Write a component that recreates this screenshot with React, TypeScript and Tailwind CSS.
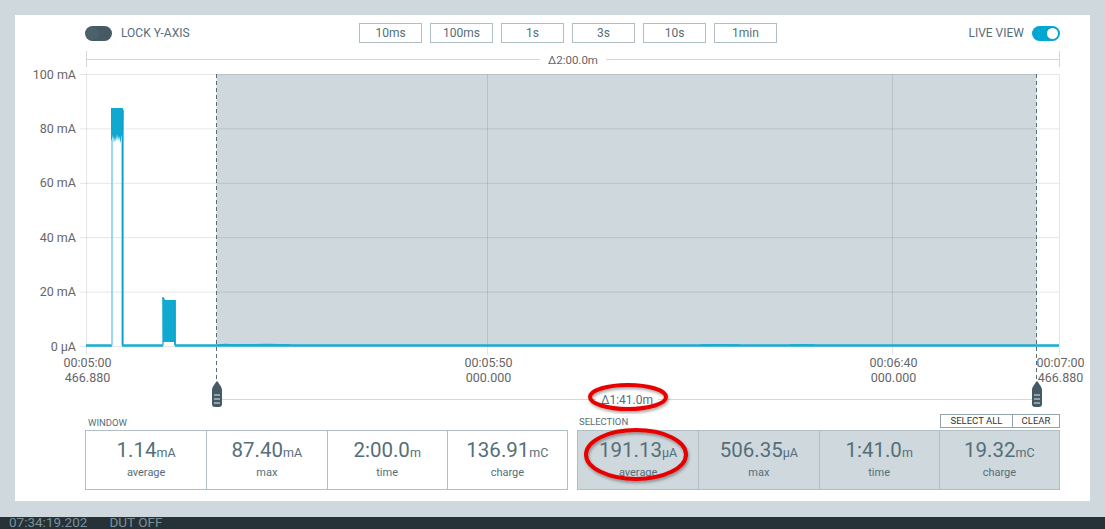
import React from "react";

const GRID_Y = [74, 128.4, 182.8, 237.2, 291.6, 346];
const Y_LABELS = ["100 mA", "80 mA", "60 mA", "40 mA", "20 mA", "0 µA"];

function Handle({ x }: { x: number }) {
  return (
    <g>
      <path
        d={`M${x},381 C${x + 1.5},383 ${x + 5},387 ${x + 5},390 L${x + 5},404 Q${x + 5},407 ${x + 2},407 L${x - 2},407 Q${x - 5},407 ${x - 5},404 L${x - 5},390 C${x - 5},387 ${x - 1.5},383 ${x},381 Z`}
        fill="#455a64"
      />
      <line x1={x - 3} x2={x + 3} y1={395} y2={395} stroke="#aebbc2" strokeWidth={1.5} />
      <line x1={x - 3} x2={x + 3} y1={399} y2={399} stroke="#aebbc2" strokeWidth={1.5} />
      <line x1={x - 3} x2={x + 3} y1={403} y2={403} stroke="#aebbc2" strokeWidth={1.5} />
    </g>
  );
}

function Chart() {
  const xTicks = [
    { x: 86.5, a: "00:05:00", b: "466.880" },
    { x: 487.5, a: "00:05:50", b: "000.000" },
    { x: 892.5, a: "00:06:40", b: "000.000" },
    { x: 1059.5, a: "00:07:00", b: "466.880" },
  ];
  return (
    <svg width={1074} height={369} viewBox="15 43 1074 369" className="block" style={{ fontFamily: "Roboto, sans-serif" }}>
      {/* window span line */}
      <line x1={86} x2={1059} y1={59.5} y2={59.5} stroke="#cfd8dc" strokeWidth={1} />
      <line x1={86.5} x2={86.5} y1={51} y2={67} stroke="#cfd8dc" strokeWidth={1} />
      <line x1={1059.5} x2={1059.5} y1={51} y2={67} stroke="#cfd8dc" strokeWidth={1} />
      <rect x={540} y={52} width={66} height={14} fill="#ffffff" />
      <text x={573} y={63.5} textAnchor="middle" fontSize={11.5} fill="#666666">
        Δ2:00.0m
      </text>

      {/* selection area */}
      <rect x={216.5} y={74} width={820} height={272} fill="#cfd8dc" />

      {/* grid */}
      {GRID_Y.map((y, i) => (
        <g key={i}>
          <line x1={80} x2={1059} y1={y + 0.5} y2={y + 0.5} stroke="rgba(0,0,0,0.1)" strokeWidth={1} />
          <text x={76} y={y + 4.5} textAnchor="end" fontSize={12.5} fill="#666666">
            {Y_LABELS[i]}
          </text>
        </g>
      ))}
      {xTicks.map((t, i) => (
        <g key={i}>
          <line x1={t.x} x2={t.x} y1={74} y2={355} stroke="rgba(0,0,0,0.1)" strokeWidth={1} />
          <text x={t.x + 1} y={366.5} textAnchor="middle" fontSize={12.5} fill="#666666">
            {t.a}
          </text>
          <text x={t.x + 1} y={381.5} textAnchor="middle" fontSize={12.5} fill="#666666">
            {t.b}
          </text>
        </g>
      ))}

      {/* data */}
      <polyline points="86,345.5 112,345.5" fill="none" stroke="#1aabd2" strokeWidth={2.5} />
      <polyline points="112,345.5 112,140" fill="none" stroke="#7fd2e6" strokeWidth={1.6} />
      <polygon
        points="111,108 123,108 123.5,112 123,140 121.5,135 120.5,143 119,136 118,141 117,134 116,142 115,137 114,143 113,135 112,141 111,139"
        fill="#11a8cf"
      />
      <polyline points="122.6,110 122.6,345.5" fill="none" stroke="#0aa5cd" strokeWidth={2} />
      <polyline points="122,345.5 163,345.5" fill="none" stroke="#1aabd2" strokeWidth={2.5} />
      <polyline points="163,345.5 163,297" fill="none" stroke="#3fb6d8" strokeWidth={1.5} />
      <polygon points="162.5,297 164.5,298.5 165,300 175,300 175,342 163,342" fill="#10a9d0" />
      <polyline points="175,300 175,345.5" fill="none" stroke="#0aa5cd" strokeWidth={1.8} />
      <polyline points="175,345.5 1059,345.5" fill="none" stroke="#1aabd2" strokeWidth={2.5} />
      <polyline points="218,345 226,344.6 234,345 240,344.8 268,344.6 290,345" fill="none" stroke="#1aabd2" strokeWidth={1.5} />
      <polyline points="700,345 720,344.7 740,345" fill="none" stroke="#1aabd2" strokeWidth={1.5} />
      <polyline points="790,345 800,344.7 815,345" fill="none" stroke="#1aabd2" strokeWidth={1.5} />

      {/* cursors */}
      <line x1={216.5} x2={216.5} y1={74} y2={385} stroke="#546e7a" strokeWidth={1} strokeDasharray="4 3" />
      <line x1={1036.5} x2={1036.5} y1={74} y2={385} stroke="#546e7a" strokeWidth={1} strokeDasharray="4 3" />

      <line x1={221} x2={1032} y1={399.5} y2={399.5} stroke="#cfd8dc" strokeWidth={1} />
      <rect x={596} y={391} width={62} height={16} fill="#ffffff" />
      <text x={627} y={403.5} textAnchor="middle" fontSize={12} fill="#546e7a">
        Δ1:41.0m
      </text>
      <Handle x={217} />
      <Handle x={1037} />
    </svg>
  );
}

function Stat({ value, unit, label, first }: { value: string; unit: string; label: string; first?: boolean }) {
  return (
    <div className={`flex flex-col items-center pt-[9px] ${first ? "" : "border-l border-[#b0bec5]"}`}>
      <div className="flex items-baseline leading-none text-[#546e7a]">
        <span className="text-[20.5px]">{value}</span>
        <span className="text-[12.5px]">{unit}</span>
      </div>
      <div className="mt-[6px] text-[11px] leading-none text-[#546e7a]">{label}</div>
    </div>
  );
}

export default function App() {
  return (
    <div
      className="relative h-[529px] w-[1105px] overflow-hidden bg-[#cfd8dc]"
      style={{ fontFamily: "Roboto, 'Noto Sans', sans-serif" }}
    >
      <div className="h-[517px] px-[15px] pt-[15px]">
        <div className="flex h-[486px] flex-col bg-white pt-[8px]">
          {/* top row */}
          <div className="flex h-[20px] items-center pl-[70px] pr-[30px]">
            <div className="flex w-[274px] items-center">
              <div className="relative h-[15px] w-[27px] rounded-full bg-[#455a64]">
                <div className="absolute left-[1px] top-[1px] h-[13px] w-[13px] rounded-full bg-[#4c616b]" />
              </div>
              <span className="ml-[9px] text-[12px] leading-none text-[#546e7a]">LOCK Y-AXIS</span>
            </div>
            <div className="flex gap-[8px]">
              {["10ms", "100ms", "1s", "3s", "10s", "1min"].map((t) => (
                <div
                  key={t}
                  className="flex h-[20px] w-[63px] items-center justify-center border border-[#b0bec5] text-[12px] leading-none text-[#546e7a]"
                >
                  {t}
                </div>
              ))}
            </div>
            <div className="flex flex-1 items-center justify-end">
              <span className="mr-[8px] text-[12px] leading-none text-[#546e7a]">LIVE VIEW</span>
              <div className="relative h-[15px] w-[28px] rounded-full bg-[#00a7d0]">
                <div className="absolute right-[2px] top-[2px] h-[11px] w-[11px] rounded-full bg-white" />
              </div>
            </div>
          </div>

          <Chart />

          {/* stats */}
          <div className="grid grid-cols-2 gap-[9px] pl-[70px] pr-[30px]">
            <div className="flex flex-col">
              <div className="flex h-[18px] items-end pb-[3px] pl-[3px] text-[9.5px] leading-none text-[#546e7a]">WINDOW</div>
              <div className="grid h-[60px] grid-cols-4 border border-[#b0bec5]">
                <Stat first value="1.14" unit="mA" label="average" />
                <Stat value="87.40" unit="mA" label="max" />
                <Stat value="2:00.0" unit="m" label="time" />
                <Stat value="136.91" unit="mC" label="charge" />
              </div>
            </div>
            <div className="flex flex-col">
              <div className="flex h-[18px] items-center justify-between">
                <span className="mt-[2px] pl-[2px] text-[9.5px] leading-none text-[#546e7a]">SELECTION</span>
                <div className="flex">
                  <div className="flex h-[14px] w-[73px] items-center justify-center border border-[#90a4ae] text-[9.5px] leading-none text-[#333333]">
                    SELECT ALL
                  </div>
                  <div className="-ml-px flex h-[14px] w-[48px] items-center justify-center border border-[#90a4ae] text-[9.5px] leading-none text-[#333333]">
                    CLEAR
                  </div>
                </div>
              </div>
              <div className="grid h-[60px] grid-cols-4 border border-[#b0bec5] bg-[#cfd8dc]">
                <Stat first value="191.13" unit="µA" label="average" />
                <Stat value="506.35" unit="µA" label="max" />
                <Stat value="1:41.0" unit="m" label="time" />
                <Stat value="19.32" unit="mC" label="charge" />
              </div>
            </div>
          </div>
        </div>
      </div>

      {/* status bar */}
      <div className="flex h-[30px] items-start gap-[22px] bg-[#263238] pl-[9px] pt-0 text-[13.5px] leading-none text-[#7a919c]">
        <span className="-mt-[1px]">07:34:19.202</span>
        <span className="-mt-[1px]">DUT OFF</span>
      </div>

      {/* red annotation ellipses */}
      <svg className="pointer-events-none absolute left-0 top-0" width={1105} height={529}>
        <defs>
          <filter id="sh" x="-20%" y="-20%" width="140%" height="140%">
            <feDropShadow dx="1" dy="2" stdDeviation="1.5" floodColor="#000" floodOpacity="0.35" />
          </filter>
        </defs>
        <ellipse cx={628} cy={397} rx={38} ry={12} fill="none" stroke="#e60000" strokeWidth={4} filter="url(#sh)" />
        <ellipse cx={636} cy={454.5} rx={50} ry={24.5} fill="none" stroke="#e60000" strokeWidth={4} filter="url(#sh)" />
      </svg>
    </div>
  );
}
